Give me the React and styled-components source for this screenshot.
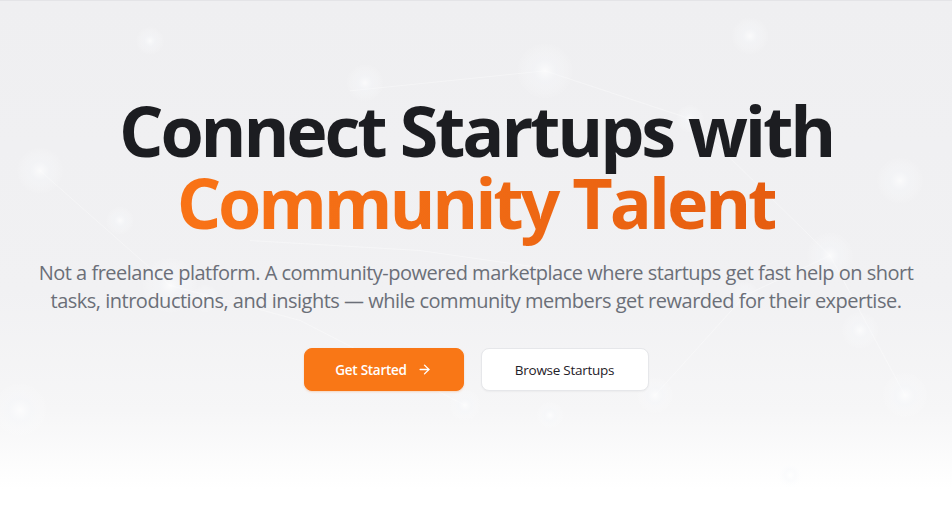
import React from "react";
import styled, { createGlobalStyle } from "styled-components";
import { ArrowRight } from "lucide-react";

const Global = createGlobalStyle`
  html, body { margin: 0; padding: 0; background: #ffffff; }
  body { font-family: "Open Sans", "Noto Sans", sans-serif; -webkit-font-smoothing: antialiased; }
  * { box-sizing: border-box; }
`;

const Hero = styled.section`
  position: relative;
  width: 100%;
  height: 526px;
  overflow: hidden;
  border-top: 1px solid #e4e4e7;
  background: linear-gradient(180deg, #efeff1 0%, #f1f1f3 55%, #f6f6f7 78%, #ffffff 93%, #ffffff 100%);
`;

const Backdrop = styled.svg`
  position: absolute;
  inset: 0;
  width: 100%;
  height: 100%;
  pointer-events: none;
`;

const Content = styled.div`
  position: relative;
  display: flex;
  flex-direction: column;
  align-items: center;
  padding-top: 93px;
  text-align: center;
`;

const Title = styled.h1`
  margin: 0;
  font-size: 70px;
  line-height: 72px;
  font-weight: 700;
  letter-spacing: -0.045em;
  color: #1c1d21;
`;

const Accent = styled.span`
  background: linear-gradient(90deg, #f97316 0%, #f06a14 50%, #e65d10 100%);
  -webkit-background-clip: text;
  background-clip: text;
  color: transparent;
`;

const Lead = styled.p`
  margin: 21px 0 0;
  font-size: 20px;
  line-height: 28px;
  letter-spacing: -0.025em;
  color: #6b6f78;
  white-space: nowrap;
`;

const Actions = styled.div`
  display: flex;
  gap: 17px;
  margin-top: 33px;
`;

const Button = styled.button`
  display: inline-flex;
  align-items: center;
  justify-content: center;
  gap: 10px;
  height: 43px;
  width: ${(p) => p.$w}px;
  border-radius: 8px;
  font-family: "Open Sans", sans-serif;
  font-size: 13.5px;
  letter-spacing: -0.02em;
  font-weight: ${(p) => (p.$primary ? 600 : 500)};
  cursor: pointer;
  color: ${(p) => (p.$primary ? "#ffffff" : "#1f2128")};
  background: ${(p) => (p.$primary ? "#f97716" : "#ffffff")};
  border: 1px solid ${(p) => (p.$primary ? "#f97716" : "#e6e7ea")};
  box-shadow: ${(p) => (p.$primary ? "0 1px 2px rgba(249,115,22,0.25)" : "0 1px 2px rgba(0,0,0,0.04)")};
`;

const dots = [
  [40, 170, 10], [545, 70, 12], [365, 82, 8], [750, 35, 8], [120, 220, 6],
  [830, 255, 10], [745, 295, 6], [170, 285, 12], [205, 298, 6], [860, 330, 8],
  [655, 395, 8], [905, 395, 10], [465, 405, 7], [550, 415, 6], [900, 180, 10],
  [20, 410, 12], [790, 475, 6], [150, 40, 6], [690, 118, 6],
];

const lines = [
  [350, 90, 545, 70], [545, 70, 690, 118], [690, 118, 830, 255], [830, 255, 745, 295],
  [40, 170, 170, 285], [170, 285, 300, 320], [300, 320, 465, 405], [745, 295, 655, 395],
  [250, 240, 420, 250], [420, 250, 560, 270], [830, 255, 905, 395],
];

export default function App() {
  return (
    <>
      <Global />
      <Hero>
        <Backdrop viewBox="0 0 952 526" preserveAspectRatio="none">
          <defs>
            <radialGradient id="glow">
              <stop offset="0%" stopColor="#ffffff" stopOpacity="0.7" />
              <stop offset="40%" stopColor="#f6f8fb" stopOpacity="0.4" />
              <stop offset="100%" stopColor="#ffffff" stopOpacity="0" />
            </radialGradient>
          </defs>
          {lines.map(([x1, y1, x2, y2], i) => (
            <line key={i} x1={x1} y1={y1} x2={x2} y2={y2} stroke="#ffffff" strokeOpacity="0.35" strokeWidth="1" />
          ))}
          {dots.map(([cx, cy, r], i) => (
            <circle key={i} cx={cx} cy={cy} r={r * 2.4} fill="url(#glow)" />
          ))}
        </Backdrop>
        <Content>
          <Title>
            Connect Startups with
            <br />
            <Accent>Community Talent</Accent>
          </Title>
          <Lead>
            Not a freelance platform. A community-powered marketplace where startups get fast help on short
            <br />
            tasks, introductions, and insights — while community members get rewarded for their expertise.
          </Lead>
          <Actions>
            <Button $primary $w={160}>
              Get Started
              <ArrowRight size={15} strokeWidth={2.2} />
            </Button>
            <Button $w={168}>Browse Startups</Button>
          </Actions>
        </Content>
      </Hero>
    </>
  );
}
